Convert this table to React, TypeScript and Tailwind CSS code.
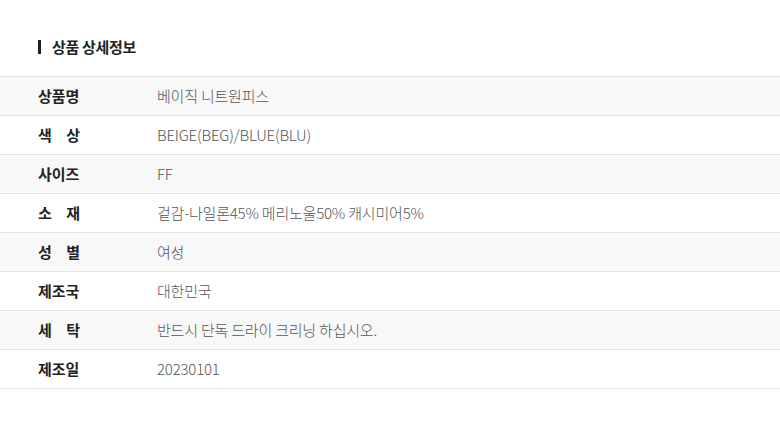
import React from "react";

const rows: { label: string[]; value: string }[] = [
  { label: ["상품명"], value: "베이직 니트원피스" },
  { label: ["색", "상"], value: "BEIGE(BEG)/BLUE(BLU)" },
  { label: ["사이즈"], value: "FF" },
  { label: ["소", "재"], value: "겉감-나일론45% 메리노울50% 캐시미어5%" },
  { label: ["성", "별"], value: "여성" },
  { label: ["제조국"], value: "대한민국" },
  { label: ["세", "탁"], value: "반드시 단독 드라이 크리닝 하십시오." },
  { label: ["제조일"], value: "20230101" },
];

export default function App() {
  return (
    <div
      className="w-[780px] h-[427px] bg-white"
      style={{ fontFamily: '"Noto Sans CJK KR", "Noto Sans", sans-serif' }}
    >
      <div className="pt-[36px] pl-[38px] h-[76px] flex items-start">
        <div className="flex items-center h-[22px]">
          <span className="w-[3px] h-[14px] bg-[#222] mr-[11px]" />
          <span className="text-[15px] font-bold text-[#222] tracking-[-0.3px]">상품 상세정보</span>
        </div>
      </div>
      <div className="border-t border-[#e4e4e4]">
        {rows.map((r, i) => (
          <div
            key={i}
            className={`flex items-center h-[39px] border-b border-[#e4e4e4] ${i % 2 === 0 ? "bg-[#f8f8f8]" : "bg-white"}`}
          >
            <div className="w-[157px] shrink-0 pl-[38px] text-[15px] font-bold text-[#222]">
              {r.label.length === 1 ? (
                <span>{r.label[0]}</span>
              ) : (
                <span className="flex justify-between w-[42px]">
                  <span>{r.label[0]}</span>
                  <span>{r.label[1]}</span>
                </span>
              )}
            </div>
            <div className="text-[15px] font-light text-[#555] tracking-[-0.2px]">{r.value}</div>
          </div>
        ))}
      </div>
    </div>
  );
}
